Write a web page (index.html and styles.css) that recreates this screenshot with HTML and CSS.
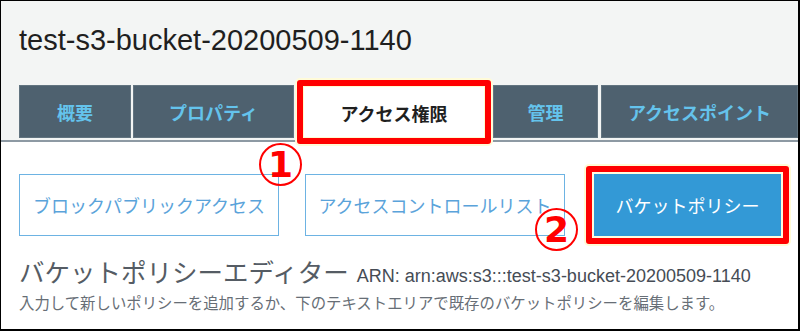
FILE: index.html
```html
<!DOCTYPE html>
<html lang="ja">
<head>
<meta charset="utf-8">
<title>test-s3-bucket-20200509-1140</title>
<link rel="stylesheet" href="styles.css">
</head>
<body>
<div class="frame">
  <header class="bucket-header">
    <h1 class="bucket-title">test-s3-bucket-20200509-1140</h1>
    <nav class="tabs">
      <a class="tab tab-overview">概要</a>
      <a class="tab tab-props">プロパティ</a>
      <a class="tab tab-perm is-active">アクセス権限</a>
      <a class="tab tab-manage">管理</a>
      <a class="tab tab-ap">アクセスポイント</a>
    </nav>
  </header>
  <main class="content">
    <div class="subtabs">
      <button class="subtab">ブロックパブリックアクセス</button>
      <button class="subtab">アクセスコントロールリスト</button>
      <div class="highlight"><button class="subtab is-active">バケットポリシー</button></div>
    </div>
    <h2 class="editor-title">バケットポリシーエディター <span class="arn">ARN: arn:aws:s3:::test-s3-bucket-20200509-1140</span></h2>
    <p class="editor-desc">入力して新しいポリシーを追加するか、下のテキストエリアで既存のバケットポリシーを編集します。</p>
  </main>
  <span class="marker marker-1">1</span>
  <span class="marker marker-2">2</span>
</div>
</body>
</html>
```

FILE: styles.css
```css
* { box-sizing: border-box; }

html, body {
  margin: 0;
  padding: 0;
  background: #ffffff;
}

body {
  font-family: "Liberation Sans", "Noto Sans CJK JP", sans-serif;
}

.frame {
  position: relative;
  width: 800px;
  height: 331px;
  border-style: solid;
  border-color: #000000;
  border-width: 1px 2px 2px 1px;
  background: #ffffff;
  overflow: hidden;
}

/* ---------- header ---------- */
.bucket-header {
  background: #f3f5f4;
  padding: 23px 0 0 18px;
  border-bottom: 2px solid #8d99a3;
}

.bucket-title {
  margin: 0;
  font-family: "Liberation Sans", sans-serif;
  font-weight: normal;
  font-size: 29px;
  line-height: 33px;
  color: #1f1f1f;
}

.tabs {
  display: flex;
  height: 53px;
  margin-top: 28px;
  margin-bottom: 2px;
}

.tab {
  display: flex;
  align-items: center;
  justify-content: center;
  background: #4e616f;
  border: 1px solid #627480;
  color: #64c3ec;
  font-family: "Noto Sans CJK JP", sans-serif;
  font-weight: bold;
  font-size: 18px;
  white-space: nowrap;
}

.tab-overview { width: 112px; margin-right: 2px; }
.tab-props { width: 161px; }
.tab-manage { width: 105px; margin-right: 3px; }
.tab-ap { flex: 1; }

.tab.is-active {
  position: relative;
  z-index: 1;
  width: 194px;
  margin: -5px 2px -6px 3px;
  background: #ffffff;
  color: #1f1f1f;
  border: 6px solid #ff0000;
  border-radius: 3px;
  box-shadow: 0 0 0 2px #fffbd8, inset 0 0 0 1px #fffad0;
  padding-top: 1px;
}

/* ---------- content ---------- */
.content {
  padding: 24px 0 0 18px;
}

.subtabs {
  display: flex;
  align-items: center;
  gap: 26px;
}

.subtab {
  width: 260px;
  height: 62px;
  padding: 0;
  background: #ffffff;
  border: 1px solid #6db3e3;
  color: #5aa3da;
  font-family: "Noto Sans CJK JP", sans-serif;
  font-size: 18px;
  white-space: nowrap;
}

.highlight {
  margin-left: -5px;
  padding: 2px;
  border: 6px solid #ff0000;
  border-radius: 3px;
  background: #fffce0;
  box-shadow: 0 0 0 2px #fffbd6;
}

.subtab.is-active {
  display: block;
  width: 187px;
  background: #3399d6;
  border-color: #3399d6;
  color: #ffffff;
}

.editor-title {
  margin: 14px 0 0 0;
  font-family: "Liberation Sans", "Noto Sans CJK JP", sans-serif;
  font-weight: normal;
  font-size: 25.5px;
  line-height: 30px;
  color: #555c64;
  white-space: nowrap;
}

.arn {
  margin-left: 1px;
  font-family: "Liberation Sans", sans-serif;
  font-size: 18px;
  color: #454c55;
}

.editor-desc {
  margin: 2px 0 0 0;
  font-family: "Noto Sans CJK JP", sans-serif;
  font-size: 15.4px;
  line-height: 18px;
  color: #676e76;
  white-space: nowrap;
}

/* ---------- annotation markers ---------- */
.marker {
  position: absolute;
  display: flex;
  align-items: center;
  justify-content: center;
  width: 43px;
  height: 43px;
  border: 2px solid #ff0000;
  border-radius: 50%;
  color: #ff0000;
  font-family: "DejaVu Sans", sans-serif;
  font-weight: bold;
  font-size: 36px;
  line-height: 1;
}

.marker-1 { left: 258px; top: 142px; }
.marker-2 { left: 534px; top: 207px; }
```
